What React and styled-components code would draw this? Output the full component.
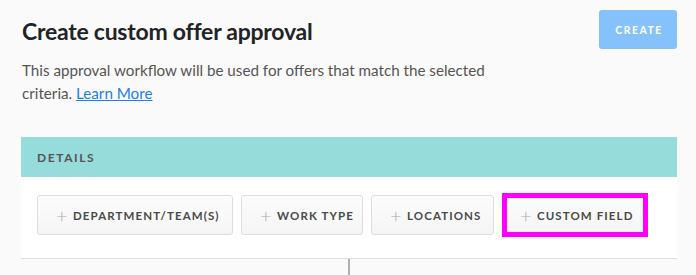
import React from "react";
import styled, { createGlobalStyle } from "styled-components";

const GlobalStyle = createGlobalStyle`
  html, body {
    margin: 0;
    padding: 0;
    background: #fafafa;
  }
  body {
    font-family: "Lato", "Open Sans", sans-serif;
    color: #333;
  }
`;

const filters = [
  { label: "Department/team(s)", width: 196 },
  { label: "Work type", width: 122 },
  { label: "Locations", width: 123 },
  { label: "Custom field", width: 146, highlighted: true },
];

export default function App() {
  return (
    <>
      <GlobalStyle />
      <Page>
        <TopRow>
          <Title>Create custom offer approval</Title>
          <CreateButton>Create</CreateButton>
        </TopRow>
        <Description>
          This approval workflow will be used for offers that match the selected
          criteria. <Link href="#">Learn More</Link>
        </Description>
        <Panel>
          <PanelHeader>Details</PanelHeader>
          <PanelBody>
            {filters.map((f) => (
              <FilterButton key={f.label} $w={f.width} $highlighted={f.highlighted}>
                <Plus>+</Plus>
                {f.label}
              </FilterButton>
            ))}
          </PanelBody>
        </Panel>
        <Connector />
      </Page>
    </>
  );
}

const Page = styled.div`
  padding: 10px 19px 0 21px;
`;

const TopRow = styled.div`
  display: flex;
  justify-content: space-between;
  align-items: flex-start;
`;

const Title = styled.h1`
  margin: 6px 0 0 1px;
  font-size: 23px;
  line-height: 30px;
  font-weight: 700;
  color: #222326;
  letter-spacing: -0.25px;
`;

const CreateButton = styled.button`
  width: 78px;
  height: 39px;
  border: none;
  border-radius: 3px;
  background: #85c2fb;
  color: #fff;
  font-family: "Lato", sans-serif;
  font-size: 10.5px;
  font-weight: 700;
  letter-spacing: 1.5px;
  text-transform: uppercase;
  padding: 0 0 0 2px;
`;

const Description = styled.p`
  margin: 10px 0 0 1px;
  width: 500px;
  font-size: 15.2px;
  line-height: 23px;
  color: #555;
`;

const Link = styled.a`
  color: #1a7fef;
  text-decoration: underline;
`;

const Panel = styled.div`
  margin-top: 32px;
  background: #fff;
  border-bottom: 1px solid #ddd;
`;

const PanelHeader = styled.div`
  height: 40px;
  display: flex;
  align-items: center;
  padding-left: 16px;
  background: #95dcdb;
  color: #555;
  font-size: 12px;
  font-weight: 700;
  letter-spacing: 1.6px;
  text-transform: uppercase;
`;

const PanelBody = styled.div`
  display: flex;
  align-items: center;
  gap: 8px;
  padding: 18px 16px 23px;
`;

const FilterButton = styled.button`
  display: flex;
  align-items: center;
  flex: none;
  box-sizing: border-box;
  white-space: nowrap;
  width: ${(p) => p.$w}px;
  height: ${(p) => (p.$highlighted ? "44px" : "40px")};
  margin: ${(p) => (p.$highlighted ? "-2px 0" : "0")};
  padding: ${(p) => (p.$highlighted ? "0 0 0 13px" : "0 0 0 18px")};
  border: ${(p) => (p.$highlighted ? "5px solid #ff00ff" : "1px solid #ddd")};
  border-radius: ${(p) => (p.$highlighted ? "0" : "3px")};
  background: linear-gradient(#fcfcfc, #f5f5f5);
  color: #4a4a4a;
  font-family: "Lato", sans-serif;
  font-size: 11.5px;
  font-weight: 700;
  letter-spacing: 1.1px;
  text-transform: uppercase;
`;

const Plus = styled.span`
  width: 10px;
  margin-right: 7px;
  color: #aaa;
  font-size: 20px;
  font-weight: 300;
  letter-spacing: 0;
  line-height: 1;
`;

const Connector = styled.div`
  width: 2px;
  height: 20px;
  margin-left: 327px;
  background: #b0b0b0;
`;
